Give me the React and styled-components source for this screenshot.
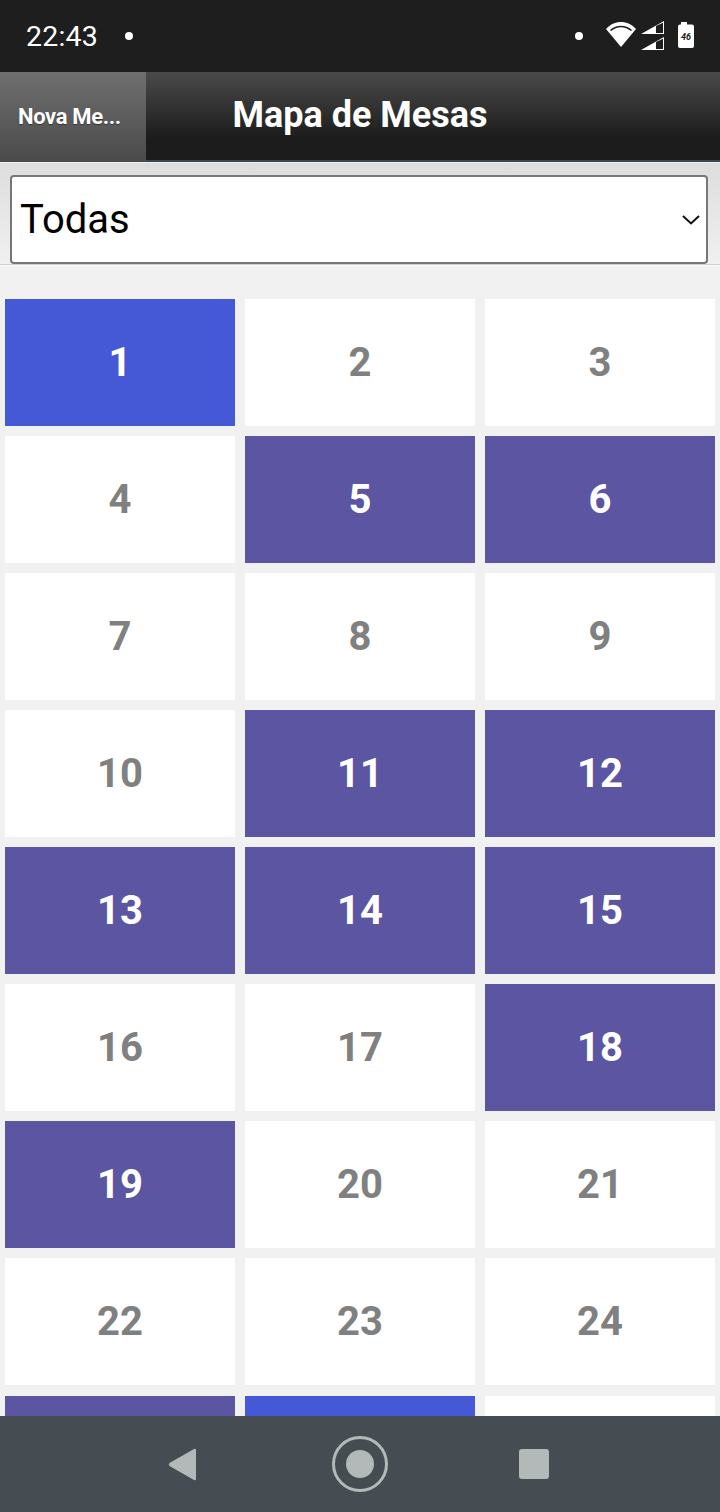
import React from "react";
import styled, { createGlobalStyle } from "styled-components";

const GlobalStyle = createGlobalStyle`
  html, body {
    margin: 0;
    padding: 0;
    background: #f0f0f0;
    font-family: Roboto, "Liberation Sans", sans-serif;
  }
`;

const Phone = styled.div`
  width: 720px;
  height: 1512px;
  display: flex;
  flex-direction: column;
  overflow: hidden;
`;

const StatusBar = styled.div`
  height: 72px;
  flex: none;
  background: #1e1e1e;
  color: #fff;
  display: flex;
  align-items: center;
  justify-content: space-between;
  padding: 0 26px 0 26px;
`;

const StatusGroup = styled.div`
  display: flex;
  align-items: center;
`;

const Clock = styled.span`
  font-size: 28.5px;
  letter-spacing: 0.2px;
`;

const Dot = styled.span`
  width: 8px;
  height: 8px;
  border-radius: 50%;
  background: #fff;
  margin-left: ${(p) => p.$left}px;
`;

const Header = styled.div`
  height: 90px;
  flex: none;
  display: flex;
  background: linear-gradient(#4a4a4a, #1c1c1c 75%);
  border-bottom: 2px solid #3d4654;
  box-sizing: border-box;
  position: relative;
`;

const BackButton = styled.div`
  width: 146px;
  height: 90px;
  flex: none;
  box-sizing: border-box;
  padding: 0 0 2px 18px;
  display: flex;
  align-items: center;
  background: linear-gradient(#6f6f6f, #4a4a4a);
  color: #fff;
  font-size: 22px;
  font-weight: 700;
  letter-spacing: -0.35px;
  text-shadow: 0 1px 1px #333;
`;

const Title = styled.h1`
  position: absolute;
  left: 0;
  right: 0;
  top: 0;
  margin: 0;
  line-height: 87px;
  text-align: center;
  color: #fff;
  font-size: 36px;
  font-weight: 700;
`;

const FilterBar = styled.div`
  height: 103px;
  flex: none;
  box-sizing: border-box;
  padding: 12px 12px 0 10px;
  background: linear-gradient(#dddddd, #f0f0f0);
  border-top: 1px solid #f0f0f0;
  border-bottom: 1px solid #cfcfcf;
`;

const Select = styled.div`
  height: 89px;
  box-sizing: border-box;
  border: 2px solid #777;
  border-radius: 4px;
  background: #fff;
  display: flex;
  align-items: center;
  justify-content: space-between;
  padding: 0 6px 0 8px;
  color: #000;
  font-size: 40px;
`;

const Content = styled.div`
  flex: 1;
  min-height: 0;
  overflow: hidden;
  box-sizing: border-box;
  padding: 33px 5px 0;
  background: #f1f1f1;
  border-top: 1px solid #f8f8f8;
`;

const Grid = styled.div`
  display: grid;
  grid-template-columns: repeat(3, 230px);
  grid-auto-rows: 127px;
  column-gap: 10px;
  row-gap: 10.07px;
`;

const TABLE_COLORS = {
  free: { bg: "#ffffff", fg: "#808080" },
  busy: { bg: "#5c55a2", fg: "#ffffff" },
  active: { bg: "#4558d6", fg: "#ffffff" },
};

const Table = styled.div`
  display: flex;
  align-items: center;
  justify-content: center;
  font-size: 40px;
  font-weight: 700;
  background: ${(p) => TABLE_COLORS[p.$status].bg};
  color: ${(p) => TABLE_COLORS[p.$status].fg};
`;

const NavBar = styled.div`
  height: 96px;
  flex: none;
  box-sizing: border-box;
  padding-right: 3px;
  background: #454c52;
  display: flex;
  align-items: center;
  justify-content: center;
  gap: 131px;
`;

const NavBack = styled.svg`
  margin-right: 5px;
`;

const busy = [5, 6, 11, 12, 13, 14, 15, 18, 19, 25];
const active = [1, 26];

// the last row sits behind the nav bar, only its top edge shows
const tables = Array.from({ length: 27 }, (_, i) => {
  const number = i + 1;
  let status = "free";
  if (busy.includes(number)) status = "busy";
  if (active.includes(number)) status = "active";
  return { number, status, label: number <= 24 ? number : null };
});

const StatusIcons = () => (
  <svg width="88" height="30" viewBox="0 0 88 30" style={{ marginLeft: 23 }}>
    <path d="M0 8 C8 -1.5 22 -1.5 30 8 L15 26 Z" fill="#fff" />
    <path d="M4.5 9.5 C11 4.2 19 4.2 25.5 9.5" fill="none" stroke="#1e1e1e" strokeWidth="1.6" />
    <path d="M35 13 L58 0 V13 Z M50 5 V12 H57 V1.8 Z" fill="#fff" fillRule="evenodd" />
    <path d="M35 29 L58 16 V29 Z M50 21 V28 H57 V17.8 Z" fill="#fff" fillRule="evenodd" />
    <path d="M75 1 H81 V3.5 H86 Q88 3.5 88 5.5 V25 Q88 27 86 27 H74 Q72 27 72 25 V5.5 Q72 3.5 74 3.5 H75 Z" fill="#fff" />
    <text x="80" y="19" textAnchor="middle" fontSize="9" fontWeight="700" fontStyle="italic" fill="#1e1e1e" fontFamily="Roboto, sans-serif">
      46
    </text>
  </svg>
);

const BackIcon = () => (
  <NavBack width="28" height="33" viewBox="0 0 28 33">
    <path d="M28 2 V31 Q28 33 26 32 L1.5 18 Q0 16.5 1.5 15 L26 1 Q28 0 28 2 Z" fill="#b3b8b9" />
  </NavBack>
);

const HomeIcon = () => (
  <svg width="56" height="56" viewBox="0 0 56 56">
    <circle cx="28" cy="28" r="26.5" fill="none" stroke="#b3b8b9" strokeWidth="3" />
    <circle cx="28" cy="28" r="14" fill="#b3b8b9" />
  </svg>
);

const SquareIcon = () => (
  <svg width="30" height="30" viewBox="0 0 30 30">
    <rect width="30" height="30" rx="3" fill="#b3b8b9" />
  </svg>
);

const App = () => {
  return (
    <Phone>
      <GlobalStyle />
      <StatusBar>
        <StatusGroup>
          <Clock>22:43</Clock>
          <Dot $left={27} />
        </StatusGroup>
        <StatusGroup>
          <Dot $left={0} />
          <StatusIcons />
        </StatusGroup>
      </StatusBar>
      <Header>
        <BackButton>Nova Me...</BackButton>
        <Title>Mapa de Mesas</Title>
      </Header>
      <FilterBar>
        <Select>
          Todas
          <svg width="18" height="10" viewBox="0 0 18 10">
            <path d="M1 1 L9 8.5 L17 1" fill="none" stroke="#111" strokeWidth="2" />
          </svg>
        </Select>
      </FilterBar>
      <Content>
        <Grid>
          {tables.map((table) => (
            <Table key={table.number} $status={table.status}>
              {table.label}
            </Table>
          ))}
        </Grid>
      </Content>
      <NavBar>
        <BackIcon />
        <HomeIcon />
        <SquareIcon />
      </NavBar>
    </Phone>
  );
};

export default App;
